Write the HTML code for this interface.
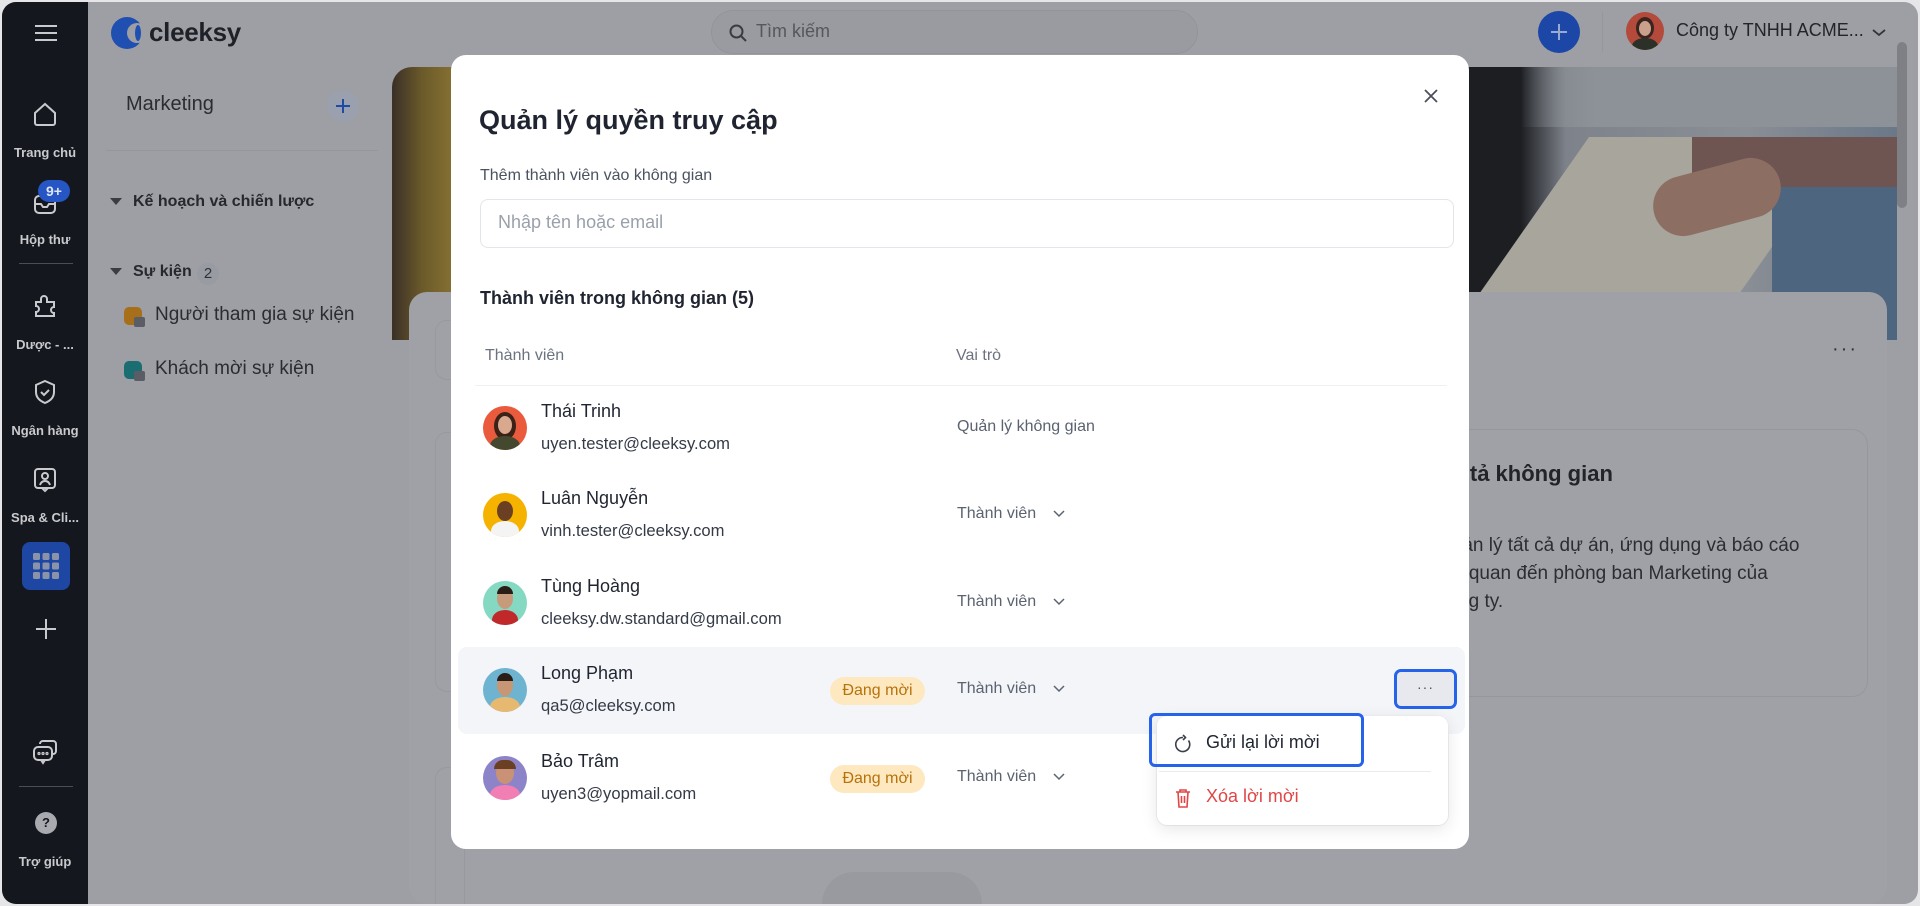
<!DOCTYPE html>
<html><head><meta charset="utf-8"><style>
*{box-sizing:border-box;margin:0;padding:0}
body{width:1920px;height:906px;overflow:hidden;background:#e6e6e8;font-family:"Liberation Sans",sans-serif;position:relative}
.frame{position:absolute;left:2px;top:2px;width:1916px;height:902px;border-radius:14px;overflow:hidden;background:#9e9fa4}
.a{position:absolute}
.rail{left:0;top:0;width:86px;height:902px;background:#15171f}
.rl{position:absolute;left:0;width:86px;text-align:center;color:#c9cacd;font-size:13px;font-weight:600}
.ic{position:absolute;left:29px;width:28px;height:28px}
.t{position:absolute;white-space:nowrap}
.modal{left:449px;top:53px;width:1018px;height:794px;background:#fff;border-radius:15px}
.em{font-size:16.6px;color:#343a46}
.role{font-size:16px;color:#5b6270}
.badge{position:absolute;width:95px;height:28px;border-radius:14px;background:#fde8bf;color:#b7720c;font-size:16px;text-align:center;line-height:28px;font-weight:500}
.av{position:absolute;left:32px;width:44px;height:44px;border-radius:50%;overflow:hidden}
</style></head><body>
<div class="frame">
<!-- rail -->
<div class="a rail">
 <svg class="a" style="left:32px;top:22px" width="24" height="18" viewBox="0 0 24 18"><path d="M1 2h22M1 9h22M1 16h22" stroke="#c9cacd" stroke-width="2"/></svg>
 <svg class="ic" style="top:98px" viewBox="0 0 28 28" fill="none" stroke="#c9cacd" stroke-width="2"><path d="M4 13 14 4l10 9v10a2 2 0 0 1-2 2H6a2 2 0 0 1-2-2z"/></svg>
 <div class="rl" style="top:143px">Trang chủ</div>
 <svg class="ic" style="top:188px" viewBox="0 0 28 28" fill="none" stroke="#c9cacd" stroke-width="2"><rect x="4" y="6" width="20" height="17" rx="4"/><path d="M4 14h6l2 3h4l2-3h6"/></svg>
 <div class="a" style="left:36px;top:178px;width:32px;height:22px;border-radius:11px;background:#2556c4;color:#dfe6f7;font-size:14px;font-weight:700;text-align:center;line-height:22px">9+</div>
 <div class="rl" style="top:230px">Hộp thư</div>
 <div class="a" style="left:17px;top:261px;width:54px;height:1px;background:#4a4d58"></div>
 <svg class="ic" style="top:290px" viewBox="0 0 28 28" fill="none" stroke="#c9cacd" stroke-width="2"><path d="M5 10h5V7a3 3 0 0 1 6 0v3h7v5a3 3 0 0 0 0 6v3H5v-4a3 3 0 0 0 0-6z"/></svg>
 <div class="rl" style="top:335px">Dược - ...</div>
 <svg class="ic" style="top:376px" viewBox="0 0 28 28" fill="none" stroke="#c9cacd" stroke-width="2"><path d="M14 3 23 7v7c0 6-4 9-9 11-5-2-9-5-9-11V7z"/><path d="M10 14l3 3 5-5"/></svg>
 <div class="rl" style="top:421px">Ngân hàng</div>
 <svg class="ic" style="top:464px" viewBox="0 0 28 28" fill="none" stroke="#c9cacd" stroke-width="2"><rect x="4" y="3" width="20" height="19" rx="3"/><circle cx="14" cy="10" r="3"/><path d="M9 19c1-3 3-4 5-4s4 1 5 4M11 22l3 3 3-3"/></svg>
 <div class="rl" style="top:508px">Spa &amp; Cli...</div>
 <div class="a" style="left:20px;top:540px;width:48px;height:48px;border-radius:8px;background:#1d47a3"></div>
 <svg class="a" style="left:31px;top:551px" width="26" height="26" viewBox="0 0 26 26" fill="#8a93a8"><rect x="0" y="0" width="7" height="7" rx="1.5"/><rect x="9.5" y="0" width="7" height="7" rx="1.5"/><rect x="19" y="0" width="7" height="7" rx="1.5"/><rect x="0" y="9.5" width="7" height="7" rx="1.5"/><rect x="9.5" y="9.5" width="7" height="7" rx="1.5"/><rect x="19" y="9.5" width="7" height="7" rx="1.5"/><rect x="0" y="19" width="7" height="7" rx="1.5"/><rect x="9.5" y="19" width="7" height="7" rx="1.5"/><rect x="19" y="19" width="7" height="7" rx="1.5"/></svg>
 <svg class="a" style="left:33px;top:616px" width="22" height="22" viewBox="0 0 22 22"><path d="M11 1v20M1 11h20" stroke="#c9cacd" stroke-width="2"/></svg>
 <svg class="ic" style="top:736px" viewBox="0 0 28 28" fill="none" stroke="#c9cacd" stroke-width="2"><path d="M9 6a3 3 0 0 1 3-3h10a3 3 0 0 1 3 3v7a3 3 0 0 1-3 3"/><rect x="3" y="9" width="18" height="13" rx="4"/><path d="M10 22l2 3 2-3"/><circle cx="8" cy="15.5" r=".6"/><circle cx="12" cy="15.5" r=".6"/><circle cx="16" cy="15.5" r=".6"/></svg>
 <div class="a" style="left:17px;top:784px;width:54px;height:1px;background:#4a4d58"></div>
 <div class="a" style="left:33px;top:810px;width:22px;height:22px;border-radius:50%;background:#a9aaaf;color:#15171f;font-size:13px;font-weight:700;text-align:center;line-height:22px">?</div>
 <div class="rl" style="top:852px">Trợ giúp</div>
</div>
<!-- topbar -->
<svg class="a" style="left:109px;top:14px" width="34" height="34" viewBox="0 0 34 34"><circle cx="16" cy="17" r="16" fill="#1f4fb0"/><circle cx="26" cy="17" r="10" fill="#9e9fa4"/><ellipse cx="27" cy="17" rx="3" ry="8" fill="#1f4fb0"/></svg>
<div class="t" style="left:147px;top:15px;font-size:26px;font-weight:600;color:#1f2128;letter-spacing:-.3px">cleeksy</div>
<div class="a" style="left:709px;top:8px;width:487px;height:44px;border-radius:22px;background:#9a9ba0;border:1px solid #93949a"></div>
<svg class="a" style="left:727px;top:22px" width="18" height="18" viewBox="0 0 18 18" fill="none" stroke="#3a3c44" stroke-width="2"><circle cx="7.5" cy="7.5" r="6"/><path d="M12 12l5 5"/></svg>
<div class="t" style="left:754px;top:19px;font-size:18px;color:#55575e">Tìm kiếm</div>
<div class="a" style="left:1536px;top:9px;width:42px;height:42px;border-radius:50%;background:#1c47a6"></div>
<svg class="a" style="left:1547px;top:20px" width="20" height="20" viewBox="0 0 20 20"><path d="M10 2v16M2 10h16" stroke="#9aa9cf" stroke-width="2"/></svg>
<div class="a" style="left:1600px;top:10px;width:1px;height:40px;background:#96979c"></div>
<div class="a" style="left:1624px;top:10px;width:38px;height:38px;border-radius:50%;background:#b34a3b;overflow:hidden"><div class="a" style="left:10px;top:5px;width:18px;height:22px;border-radius:50%;background:#3b2420"></div><div class="a" style="left:13px;top:9px;width:12px;height:15px;border-radius:50%;background:#c9a08c"></div><div class="a" style="left:6px;top:26px;width:26px;height:16px;border-radius:50%;background:#2b3028"></div></div>
<div class="t" style="left:1674px;top:18px;font-size:18px;color:#22242a;font-weight:500">Công ty TNHH ACME...</div>
<svg class="a" style="left:1869px;top:26px" width="16" height="10" viewBox="0 0 16 10"><path d="M2 2l6 5 6-5" fill="none" stroke="#33353c" stroke-width="1.8"/></svg>
<!-- side panel -->
<div class="t" style="left:124px;top:91px;font-size:20px;color:#2a2c33">Marketing</div>
<div class="a" style="left:325px;top:88px;width:32px;height:32px;border-radius:50%;background:#9aa0ad"></div>
<svg class="a" style="left:333px;top:96px" width="16" height="16" viewBox="0 0 16 16"><path d="M8 1v14M1 8h14" stroke="#1e4aa8" stroke-width="2"/></svg>
<div class="a" style="left:104px;top:148px;width:272px;height:1px;background:#95969b"></div>
<svg class="a" style="left:108px;top:196px" width="12" height="8"><path d="M0 0h12L6 7z" fill="#3a3c44"/></svg>
<div class="t" style="left:131px;top:191px;font-size:16px;font-weight:700;color:#26282f">Kế hoạch và chiến lược</div>
<svg class="a" style="left:108px;top:266px" width="12" height="8"><path d="M0 0h12L6 7z" fill="#3a3c44"/></svg>
<div class="t" style="left:131px;top:261px;font-size:16px;font-weight:700;color:#26282f">Sự kiện</div>
<div class="a" style="left:195px;top:261px;width:22px;height:22px;border-radius:11px;background:#999ba3;color:#30323a;font-size:15px;text-align:center;line-height:22px">2</div>
<div class="a" style="left:122px;top:305px;width:18px;height:18px;border-radius:5px;background:#a86f1a"></div><div class="a" style="left:132px;top:315px;width:11px;height:10px;border-radius:2px;background:#5a5c66"></div>
<div class="t" style="left:153px;top:302px;font-size:19px;color:#2a2c33">Người tham gia sự kiện</div>
<div class="a" style="left:122px;top:359px;width:18px;height:18px;border-radius:5px;background:#1a6e72"></div><div class="a" style="left:132px;top:369px;width:11px;height:10px;border-radius:2px;background:#5a5c66"></div>
<div class="t" style="left:153px;top:356px;font-size:19px;color:#2a2c33">Khách mời sự kiện</div>
<!-- main -->
<div class="a" style="left:390px;top:65px;width:1505px;height:273px;border-radius:20px 0 0 0;overflow:hidden;background:linear-gradient(90deg,#3a2f27 0%,#6b5a2a 2%,#857032 4%,#5c5a3a 6%,#5a5e66 30%,#1c1e22 70%,#1c1e22 75%,#7e828a 78%,#8a8e95 90%,#6a7888 100%)">
 <div class="a" style="left:0;top:0;width:1505px;height:60px;background:linear-gradient(90deg,rgba(0,0,0,0) 75%,#8d9298 80%,#8d9298 100%)"></div>
 <div class="a" style="left:1120px;top:70px;width:260px;height:220px;background:#a7a59c;transform:skewX(-35deg)"></div>
 <div class="a" style="left:1300px;top:70px;width:205px;height:50px;background:#6e5552"></div>
 <div class="a" style="left:1380px;top:120px;width:125px;height:153px;background:#4e6580"></div>
 <div class="a" style="left:1260px;top:100px;width:130px;height:60px;border-radius:30px;background:#8c6e63;transform:rotate(-15deg)"></div>
</div>
<div class="a" style="left:1895px;top:40px;width:10px;height:166px;border-radius:5px;background:#7f8086"></div>
<div class="a" style="left:407px;top:290px;width:1478px;height:612px;border-radius:18px;background:#a0a1a6"></div>
<div class="a" style="left:433px;top:318px;width:30px;height:60px;border-radius:12px;border:1px solid #98999e"></div>
<div class="t" style="left:1830px;top:336px;font-size:20px;color:#33353c;letter-spacing:2px">···</div>
<div class="a" style="left:1371px;top:427px;width:495px;height:268px;border-radius:16px;border:1px solid #96979c"></div>
<div class="t" style="left:1430px;top:459px;font-size:22px;font-weight:700;color:#22242a">Mô tả không gian</div>
<div class="t" style="left:1435px;top:533px;font-size:19px;color:#2b2d33">Quản lý tất cả dự án, ứng dụng và báo cáo</div>
<div class="t" style="left:1432px;top:561px;font-size:19px;color:#2b2d33">liên quan đến phòng ban Marketing của</div>
<div class="t" style="left:1436px;top:589px;font-size:19px;color:#2b2d33">công ty.</div>
<div class="a" style="left:433px;top:430px;width:30px;height:260px;border-radius:12px;border:1px solid #98999e"></div>
<div class="a" style="left:433px;top:765px;width:30px;height:137px;border-radius:12px 12px 0 0;border:1px solid #98999e;border-bottom:none"></div>
<div class="a" style="left:820px;top:870px;width:160px;height:32px;border-radius:80px 80px 0 0;background:#999a9f"></div>
<!-- modal -->
<div class="a modal">
 <svg class="a" style="left:972px;top:33px" width="16" height="16" viewBox="0 0 16 16"><path d="M2 2l12 12M14 2 2 14" stroke="#4a4f5a" stroke-width="1.8"/></svg>
 <div class="t" style="left:28px;top:50px;font-size:27px;font-weight:600;color:#1f2430">Quản lý quyền truy cập</div>
 <div class="t" style="left:29px;top:112px;font-size:16px;color:#4b5260">Thêm thành viên vào không gian</div>
 <div class="a" style="left:29px;top:144px;width:974px;height:49px;border:1px solid #e3e5ea;border-radius:8px"></div>
 <div class="t" style="left:47px;top:157px;font-size:18px;color:#9aa0ab">Nhập tên hoặc email</div>
 <div class="t" style="left:29px;top:233px;font-size:18px;font-weight:700;color:#1f2430">Thành viên trong không gian (5)</div>
 <div class="t" style="left:34px;top:292px;font-size:16px;color:#6b7280">Thành viên</div>
 <div class="t" style="left:505px;top:292px;font-size:16px;color:#6b7280">Vai trò</div>
 <div class="a" style="left:24px;top:330px;width:972px;height:1px;background:#eef0f3"></div>
 <div class="a" style="left:7px;top:592px;width:1007px;height:87px;border-radius:9px;background:#f4f5f9"></div>
 <!-- rows -->
 <div class="av" style="top:351px;background:#ea5a3c"><div class="a" style="left:11px;top:6px;width:22px;height:28px;border-radius:50%;background:#3a2218"></div><div class="a" style="left:15px;top:10px;width:14px;height:18px;border-radius:50%;background:#d9a98f"></div><div class="a" style="left:7px;top:30px;width:30px;height:20px;border-radius:50%;background:#44482f"></div></div>
 <div class="t" style="left:90px;top:346px;font-size:18px;color:#1f2430">Thái Trinh</div>
 <div class="t em" style="left:90px;top:379px">uyen.tester@cleeksy.com</div>
 <div class="t role" style="left:506px;top:363px">Quản lý không gian</div>

 <div class="av" style="top:438px;background:#f5b300"><div class="a" style="left:14px;top:8px;width:16px;height:20px;border-radius:50%;background:#6b3f22"></div><div class="a" style="left:8px;top:28px;width:28px;height:20px;border-radius:50%;background:#f4f4f4"></div></div>
 <div class="t" style="left:90px;top:433px;font-size:18px;color:#1f2430">Luân Nguyễn</div>
 <div class="t em" style="left:90px;top:466px">vinh.tester@cleeksy.com</div>
 <div class="t role" style="left:506px;top:450px">Thành viên</div>
 <svg class="a" style="left:602px;top:455px" width="12" height="8"><path d="M1 1l5 5 5-5" fill="none" stroke="#5b6270" stroke-width="1.5"/></svg>

 <div class="av" style="top:526px;background:#85d8c2"><div class="a" style="left:14px;top:7px;width:16px;height:21px;border-radius:50%;background:#c89a7c"></div><div class="a" style="left:14px;top:5px;width:16px;height:8px;border-radius:8px 8px 0 0;background:#2a1c16"></div><div class="a" style="left:9px;top:29px;width:26px;height:20px;border-radius:50%;background:#c0282a"></div></div>
 <div class="t" style="left:90px;top:521px;font-size:18px;color:#1f2430">Tùng Hoàng</div>
 <div class="t em" style="left:90px;top:554px">cleeksy.dw.standard@gmail.com</div>
 <div class="t role" style="left:506px;top:538px">Thành viên</div>
 <svg class="a" style="left:602px;top:543px" width="12" height="8"><path d="M1 1l5 5 5-5" fill="none" stroke="#5b6270" stroke-width="1.5"/></svg>

 <div class="av" style="top:613px;background:#6eb3d0"><div class="a" style="left:14px;top:7px;width:16px;height:21px;border-radius:50%;background:#c79675"></div><div class="a" style="left:14px;top:5px;width:16px;height:8px;border-radius:8px 8px 0 0;background:#2a1c16"></div><div class="a" style="left:7px;top:29px;width:30px;height:20px;border-radius:50%;background:#e7b970"></div></div>
 <div class="t" style="left:90px;top:608px;font-size:18px;color:#1f2430">Long Phạm</div>
 <div class="t em" style="left:90px;top:641px">qa5@cleeksy.com</div>
 <div class="badge" style="left:379px;top:622px">Đang mời</div>
 <div class="t role" style="left:506px;top:625px">Thành viên</div>
 <svg class="a" style="left:602px;top:630px" width="12" height="8"><path d="M1 1l5 5 5-5" fill="none" stroke="#5b6270" stroke-width="1.5"/></svg>
 <div class="a" style="left:943px;top:614px;width:63px;height:40px;border:3px solid #2563eb;border-radius:7px;background:#e8e9ee;text-align:center;line-height:30px;color:#4a4f5a;font-size:14px;letter-spacing:1px">···</div>

 <div class="av" style="top:701px;background:#8c83c9"><div class="a" style="left:13px;top:6px;width:18px;height:22px;border-radius:50%;background:#c99276"></div><div class="a" style="left:11px;top:4px;width:22px;height:9px;border-radius:10px 10px 0 0;background:#6b3f22"></div><div class="a" style="left:7px;top:29px;width:30px;height:20px;border-radius:50%;background:#f27fb4"></div></div>
 <div class="t" style="left:90px;top:696px;font-size:18px;color:#1f2430">Bảo Trâm</div>
 <div class="t em" style="left:90px;top:729px">uyen3@yopmail.com</div>
 <div class="badge" style="left:379px;top:710px">Đang mời</div>
 <div class="t role" style="left:506px;top:713px">Thành viên</div>
 <svg class="a" style="left:602px;top:718px" width="12" height="8"><path d="M1 1l5 5 5-5" fill="none" stroke="#5b6270" stroke-width="1.5"/></svg>

 <!-- dropdown -->
 <div class="a" style="left:706px;top:661px;width:291px;height:109px;background:#fff;border-radius:10px;box-shadow:0 4px 16px rgba(0,0,0,.1),0 0 0 1px #f0f1f4"></div>
 <div class="a" style="left:698px;top:658px;width:215px;height:54px;border:3px solid #2563eb;border-radius:6px"></div>
 <svg class="a" style="left:723px;top:679px" width="18" height="20" viewBox="0 0 18 20" fill="none" stroke="#3b404b" stroke-width="1.6"><path d="M14.5 6.5A7 7 0 1 1 9 3.5"/><path d="M9 1l2.5 2.5L9 6"/></svg>
 <div class="t" style="left:755px;top:677px;font-size:18px;color:#1f2430">Gửi lại lời mời</div>
 <div class="a" style="left:708px;top:716px;width:272px;height:1px;background:#e8eaee"></div>
 <svg class="a" style="left:724px;top:733px" width="16" height="20" viewBox="0 0 16 20" fill="none" stroke="#e04646" stroke-width="1.6"><path d="M1 4h14M5 4V2h6v2M3 4l1 15h8l1-15M6.5 8v7M9.5 8v7"/></svg>
 <div class="t" style="left:755px;top:731px;font-size:18px;color:#e04646">Xóa lời mời</div>
</div>
</div>
</body></html>
